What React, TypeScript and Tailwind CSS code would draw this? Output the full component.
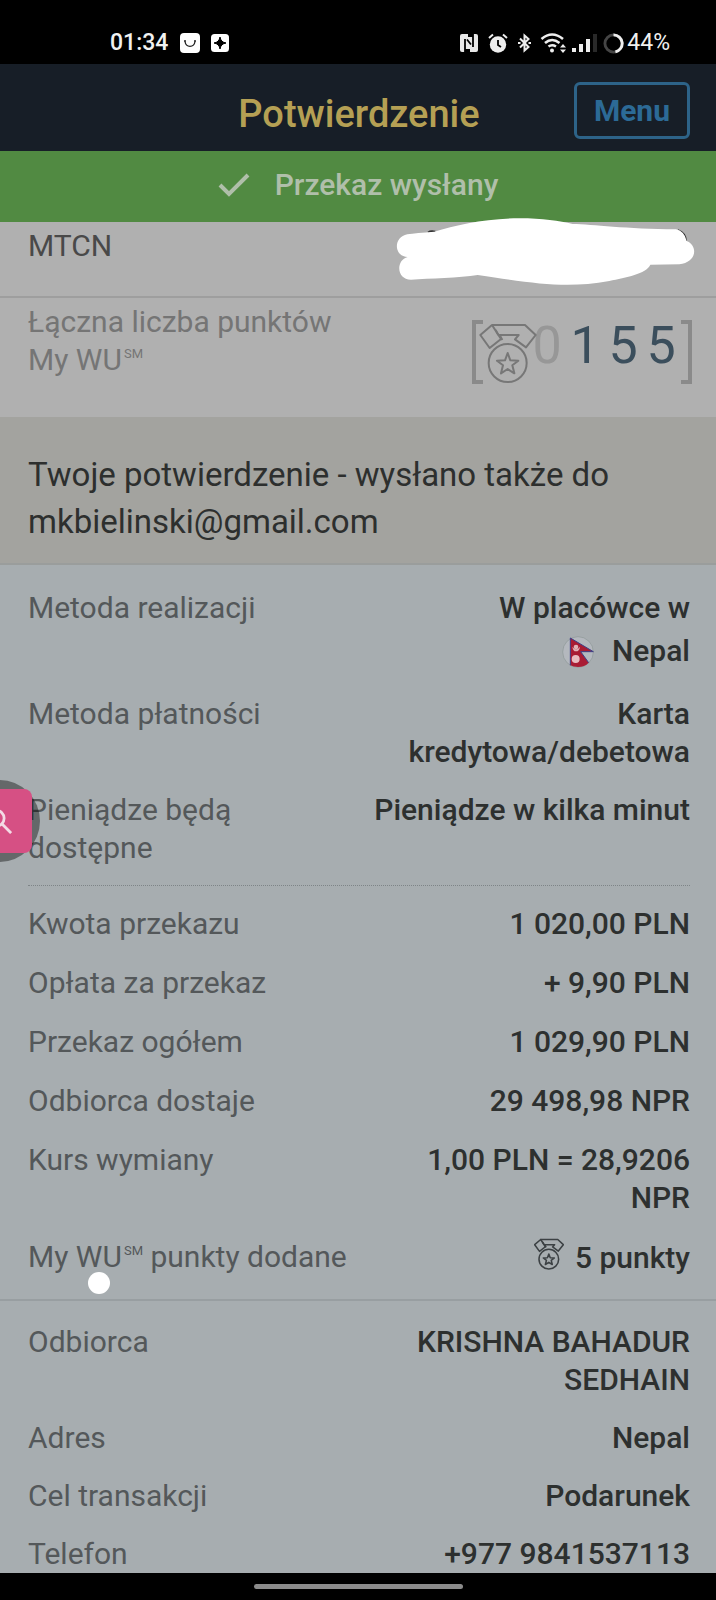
import React from "react";

type RowProps = {
	label: React.ReactNode;
	children: React.ReactNode;
};

function Row({ label, children }: RowProps) {
	return (
		<div className="flex justify-between gap-4">
			<dt className="text-[#54585a]">{label}</dt>
			<dd className="shrink-0 text-right font-medium text-[#2d302f]">{children}</dd>
		</div>
	);
}

function Sm() {
	return <sup className="top-[-12px] ml-[2px] align-baseline text-[13px] leading-none">SM</sup>;
}

function Medal({ className }: { className: string }) {
	return (
		<svg className={className} viewBox="296 338 174 184" fill="none" stroke="currentColor" strokeLinejoin="round">
			<path d="M335 346 300 376 328 415 362 388Z" />
			<path d="M335 346H434L466 376 437 413 404 389 415 376H354" />
			<path d="M366 391 358 376M346 361 354 376" />
			<circle cx="382" cy="460" r="57" />
			<path d="M382 430 390 452 414 453 396 467 402 491 382 478 362 491 368 467 350 453 374 452Z" />
		</svg>
	);
}

function NepalFlag() {
	return (
		<svg className="mr-[18px] inline-block h-8 w-8 align-[-7px]" viewBox="0 0 96 96">
			<circle cx="48" cy="48" r="46" fill="#b4b8be" stroke="#8c9796" strokeWidth="2" />
			<path d="M25 6 94 47H56L80 80Q68 93 48 93 34 93 25 88Z" fill="#a91c34" />
			<path d="M25 88V6L94 47H56L80 80" fill="none" stroke="#3b3f86" strokeWidth="3" />
			<path d="M31 32Q42 48 54 32 52 46 42 46 33 46 31 32Z" fill="#e0b3b9" />
			<circle cx="42" cy="33" r="7" fill="#e0b3b9" />
			<circle cx="41" cy="69" r="12" fill="#e8bcc1" />
		</svg>
	);
}

function Status_bar() {
	return (
		<div className="flex h-16 items-center justify-between bg-black pt-[22px] pr-[46px] pl-[110px] text-[23px] text-[#f1f1f1]">
			<div className="flex items-center">
				<span className="font-medium">01:34</span>
				<svg className="ml-[12px] h-5 w-5" viewBox="0 0 20 20">
					<rect width="20" height="20" rx="4" fill="#fff" />
					<path d="M5 8.500C6 15 14 15 15 8.500" fill="none" stroke="#222" strokeWidth="1.300" />
					<circle cx="5" cy="8" r="1" fill="#222" />
					<circle cx="15" cy="8" r="1" fill="#222" />
				</svg>
				<svg className="ml-[11px] h-[18px] w-[18px]" viewBox="0 0 18 18">
					<rect width="18" height="18" rx="3.500" fill="#fff" />
					<path d="M9 3Q9.800 8.200 15 9 9.800 9.800 9 15 8.200 9.800 3 9 8.200 8.200 9 3Z" fill="#000" stroke="#000" />
				</svg>
			</div>
			<div className="flex items-center">
				{/* nfc */}
				<svg className="h-[18px] w-[18px]" viewBox="0 0 18 18">
					<rect width="18" height="18" rx="2" fill="#e8e8e8" />
					<path d="M5 5V18M13 0V13M7 5.500 11 10.500" fill="none" stroke="#000" strokeWidth="1.800" />
					<path d="M8 0H13V3H8ZM5 15H10V18H5Z" fill="#000" />
				</svg>
				{/* alarm */}
				<svg className="ml-[10px] h-5 w-5" viewBox="0 0 20 20">
					<circle cx="10" cy="11.500" r="8.200" fill="#eee" />
					<path d="M1 5 5 1.500M19 5 15 1.500" stroke="#eee" strokeWidth="2" />
					<path d="M10 7V12L13 14" fill="none" stroke="#000" strokeWidth="1.800" />
				</svg>
				{/* bluetooth */}
				<svg className="ml-[10px] h-5 w-[13px]" viewBox="0 0 13 20" fill="none" stroke="#eee" strokeWidth="2">
					<path d="M2 5.500 10.500 14 6.500 17.500V2.500L10.500 6 2 14.500" />
					<path d="M0 10H2.500M10.500 10H13" />
				</svg>
				{/* wifi */}
				<svg className="ml-[9px] h-5 w-[27px]" viewBox="0 0 27 20" fill="none" stroke="#eee" strokeWidth="2.600">
					<path d="M1.500 6Q12 -3 23 6M5 10Q12 4 19.500 10M8.500 13.500Q12 11 16 13.500" />
					<circle cx="12" cy="17.500" r="2" fill="#eee" stroke="none" />
					<path d="M23 11 26 14.500H20ZM23 20 26 16.500H20Z" fill="#eee" stroke="none" />
				</svg>
				{/* signal */}
				<svg className="ml-[5px] h-5 w-[25px]" viewBox="0 0 25 20" fill="#eee">
					<rect y="15" width="4" height="4" />
					<rect x="7" y="11" width="4" height="8" />
					<rect x="14" y="6" width="4" height="13" />
					<rect x="21" y="1" width="4" height="18" fill="#292929" />
				</svg>
				{/* battery */}
				<svg className="ml-[6px] h-[21px] w-[21px]" viewBox="0 0 22 22" fill="none" strokeWidth="3">
					<circle cx="11" cy="11" r="9" stroke="#454545" />
					<path d="M11 2A9 9 0 0 1 13 19.800" stroke="#eee" />
				</svg>
				<span className="ml-[3px]">44%</span>
			</div>
		</div>
	);
}

function App() {
	return (
		<div className="relative flex min-h-screen flex-col overflow-hidden bg-[#a7adb0] font-[Roboto,sans-serif] text-[30px] leading-[38px]">
			<Status_bar />
			<header className="grid h-[87px] grid-cols-[1fr_auto_1fr] items-center bg-[#171e27] pt-[6px] pr-[26px] pl-[28px]">
				<h1 className="col-start-2 pt-[6px] text-[38px] font-medium text-[#b5a054]">Potwierdzenie</h1>
				<button className="h-[57px] justify-self-end rounded-md border-3 border-[#2d6388] px-[17px] text-[30px] leading-none font-bold text-[#2c6a96]">
					Menu
				</button>
			</header>
			<div className="flex h-[71px] items-center justify-center gap-[25px] bg-[#518a42] pb-[3px] font-medium text-[#b0bfaa]">
				<svg className="h-[25px] w-[32px]" viewBox="0 0 32 25" fill="none" stroke="currentColor" strokeWidth="4">
					<path d="M2 12 11 21 30 2" />
				</svg>
				Przekaz wysłany
			</div>

			<section className="bg-[#b0b0b0]">
				<div className="relative h-[76px] border-b-2 border-[#9e9e9e] pt-[5px] pl-[28px] text-[#494949]">
					MTCN
					<svg className="absolute top-[-5px] right-[20px] h-[70px] w-[300px]" viewBox="50 20 900 210">
						<path d="M146 66Q155 60 168 64M896 59Q920 68 921 94" fill="none" stroke="#333" strokeWidth="5" />
						<path
							d="M84 72Q110 68 165 64C230 44 320 24 420 24 490 24 540 32 580 41 640 42 740 56 890 57Q915 62 922 92C955 105 955 155 900 162L813 163C800 192 740 200 690 212 560 235 470 220 295 194 240 203 150 204 95 208 52 208 48 150 85 140 42 138 42 80 84 72Z"
							fill="#fff"
						/>
					</svg>
				</div>
				<div className="flex h-[119px] justify-between pt-[5px] pr-[24px] pl-[28px] text-[#757575]">
					<p>
						Łączna liczba punktów
						<br />
						My WU
						<Sm />
					</p>
					<div className="mt-[17px] flex h-16 text-[52px] leading-[52px] text-[#3b4e5c]">
						<span className="w-[11px] border-y-4 border-l-4 border-[#8a8a8a]" />
						<Medal className="relative mt-[2px] mr-[-9px] ml-[-4px] h-[62px] w-[58px] stroke-6 text-[#777]" />
						<span className="grid grid-cols-[repeat(4,38px)] text-center">
							<span className="text-[#979797]">0</span>
							<span>1</span>
							<span>5</span>
							<span>5</span>
						</span>
						<span className="ml-[1px] w-[11px] border-y-4 border-r-4 border-[#8a8a8a]" />
					</div>
				</div>
			</section>

			<p className="border-b-2 border-[#9a9d9c] bg-[#a3a39f] pt-[34px] pr-[26px] pb-[18px] pl-[28px] text-[33px] leading-[47px] text-[#2d2f2e]">
				Twoje potwierdzenie - wysłano także do
				<br />
				mkbielinski@gmail.com
			</p>

			<main className="grow">
				<dl className="relative flex flex-col gap-5 pt-6 pr-[26px] pl-[28px]">
					<Row label="Metoda realizacji">
						W placówce w
						<div className="leading-[48px]">
							<NepalFlag />
							Nepal
						</div>
					</Row>
					<Row label="Metoda płatności">
						Karta
						<br />
						kredytowa/debetowa
					</Row>
					<Row
						label={
							<>
								Pieniądze będą
								<br />
								dostępne
							</>
						}
					>
						Pieniądze w kilka minut
					</Row>
					<button
						aria-label="Szukaj"
						className="absolute bottom-[5px] left-[-42px] flex h-[82px] w-[82px] items-center rounded-full bg-black/40"
					>
						<span className="ml-[10px] flex h-16 w-16 items-center justify-end rounded-lg bg-[#d65084] pr-[20px]">
							<svg className="h-[25px] w-[25px]" viewBox="0 0 27 27" fill="none" stroke="#f3dbe5" strokeWidth="3">
								<circle cx="10" cy="10" r="8.500" />
								<path d="M16 16 26 26M7 10H13" />
							</svg>
						</span>
					</button>
				</dl>
				<dl className="relative mt-[18px] mr-[26px] ml-[28px] flex flex-col gap-[21px] border-t border-dotted border-[#7e8487] pt-[19px] pb-[22px]">
					<Row label="Kwota przekazu">1 020,00 PLN</Row>
					<Row label="Opłata za przekaz">+ 9,90 PLN</Row>
					<Row label="Przekaz ogółem">1 029,90 PLN</Row>
					<Row label="Odbiorca dostaje">29 498,98 NPR</Row>
					<Row label="Kurs wymiany">
						1,00 PLN = 28,9206
						<br />
						NPR
					</Row>
					<Row
						label={
							<>
								My WU
								<Sm /> punkty dodane
							</>
						}
					>
						<Medal className="mr-[11px] inline-block h-8 w-[30px] stroke-9 align-[-2px] text-[#3c4144]" />5 punkty
					</Row>
					<span className="absolute bottom-[5px] left-[60px] h-[22px] w-[22px] rounded-full bg-white" />
				</dl>
				<dl className="flex flex-col gap-5 border-t-2 border-[#989ea1] pt-[22px] pr-[26px] pl-[28px]">
					<Row label="Odbiorca">
						KRISHNA BAHADUR
						<br />
						SEDHAIN
					</Row>
					<Row label="Adres">Nepal</Row>
					<Row label="Cel transakcji">Podarunek</Row>
					<Row label="Telefon">+977 9841537113</Row>
				</dl>
			</main>
			<footer className="flex h-[28px] justify-center bg-black pt-[11px]">
				<span className="h-[5px] w-[209px] rounded-full bg-[#8b8b8b]" />
			</footer>
		</div>
	);
}

export default App;
